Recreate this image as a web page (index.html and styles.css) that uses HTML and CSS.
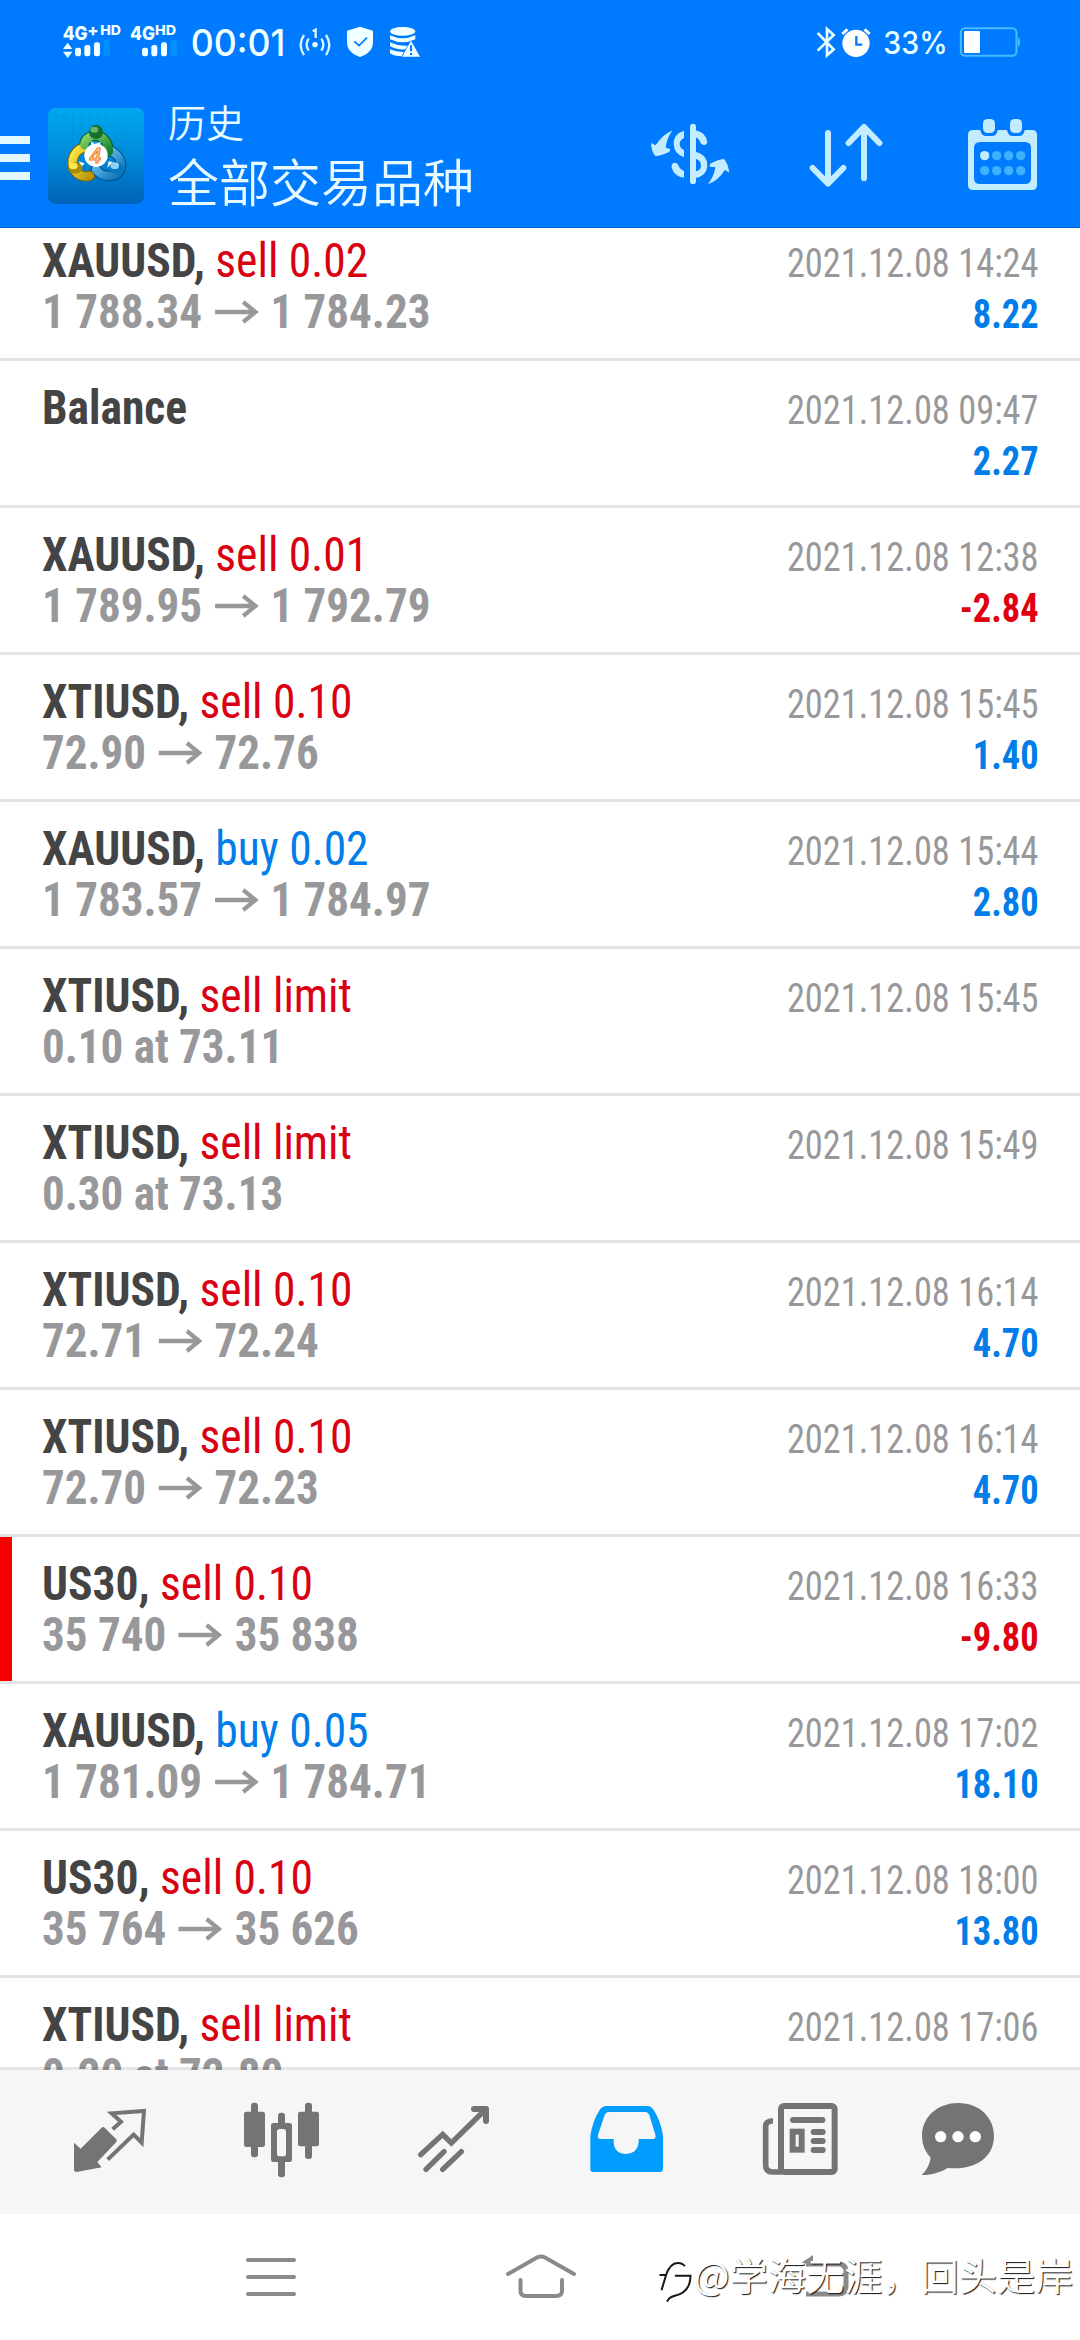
FILE: index.html
```html
<!DOCTYPE html>
<html lang="zh-CN">
<head>
<meta charset="utf-8">
<title>历史</title>
<link rel="stylesheet" href="styles.css">
</head>
<body>
<svg class="defs" aria-hidden="true"><symbol id="arrow" viewBox="0 0 46 24"><path d="M0 12H42M30 2L43 12L30 22" fill="none" stroke="currentColor" stroke-width="4.4"/></symbol></svg>

<header class="top">
  <div class="status">
    <svg class="status-left" viewBox="0 0 1200 150" fill="#f0ffff">
      <g font-family="Inter, sans-serif" font-weight="800">
        <text x="38" y="60" font-size="57" textLength="75" lengthAdjust="spacingAndGlyphs">4G</text>
        <text x="112" y="47" font-size="48" textLength="34" lengthAdjust="spacingAndGlyphs">+</text>
        <text x="151" y="45" font-size="40" textLength="62" lengthAdjust="spacingAndGlyphs">HD</text>
        <text x="240" y="60" font-size="57" textLength="75" lengthAdjust="spacingAndGlyphs">4G</text>
        <text x="315" y="45" font-size="40" textLength="63" lengthAdjust="spacingAndGlyphs">HD</text>
      </g>
      <text x="422" y="108" font-size="112" font-family="Inter, sans-serif" font-weight="500" textLength="284" lengthAdjust="spacingAndGlyphs">00:01</text>
      <path d="M53 68L67 87H39ZM39 95H67L53 114Z"/>
      <rect x="75" y="83" width="18" height="26" rx="7"/><rect x="103" y="75" width="18" height="34" rx="7"/><rect x="132" y="67" width="18" height="42" rx="7"/><rect x="162" y="60" width="18" height="49" rx="5" fill="#0091ff"/>
      <rect x="276" y="83" width="18" height="26" rx="7"/><rect x="304" y="75" width="18" height="34" rx="7"/><rect x="333" y="67" width="18" height="42" rx="7"/><rect x="363" y="60" width="18" height="49" rx="5" fill="#0091ff"/>
      <circle cx="795" cy="74" r="8"/>
      <path d="M788 34L797 29V54M776 56Q764 74 776 92M814 56Q826 74 814 92M762 45Q742 74 762 105M828 45Q848 74 828 105" fill="none" stroke="#d8f8ff" stroke-width="7"/>
      <path d="M930 20L969 32V66Q969 98 930 111Q891 98 891 66V32Z"/>
      <path d="M913 64L927 77L951 53" fill="none" stroke="#007aff" stroke-width="5"/>
      <ellipse cx="1058" cy="34" rx="38" ry="13"/>
      <path d="M1020 46Q1058 64 1096 46V58Q1058 76 1020 58ZM1020 67Q1046 80 1073 77L1066 88Q1040 90 1020 79ZM1020 88Q1040 97 1061 96L1055 109Q1032 109 1020 100Z"/>
      <path d="M1083 62L1110 110H1056Z"/>
      <path d="M1083 76V94M1083 99V105" stroke="#007aff" stroke-width="6"/>
    </svg>
    <svg class="status-right" viewBox="522 0 630 150" fill="#fff">
      <path d="M533 39L581 88L561 106V27L581 45L533 92" fill="none" stroke="#e8ffff" stroke-width="8"/>
      <circle cx="648" cy="70" r="41"/>
      <path d="M607 42L622 28M689 42L674 28" stroke="#fff" stroke-width="9"/>
      <path d="M649 48V74H667" fill="none" stroke="#007aff" stroke-width="7"/>
      <text x="730" y="103" font-size="92" font-family="Inter, sans-serif" font-weight="500" textLength="193" lengthAdjust="spacingAndGlyphs" fill="#e8ffff">33%</text>
      <rect x="962.500" y="24.500" width="167" height="83" rx="13" fill="none" stroke="#49bcff" stroke-width="6"/>
      <rect x="972" y="33" width="48" height="66" rx="3"/>
      <path d="M1134 52Q1140 54 1140 66Q1140 78 1134 80Z" fill="#49bcff"/>
    </svg>
  </div>
  <div class="bar">
    <div class="menu"><i></i><i></i><i></i></div>
    <svg class="logo" viewBox="144 24 288 288">
      <defs>
        <linearGradient id="bg" x1="0" y1="0" x2="0" y2="1"><stop offset="0" stop-color="#00a9f0"/><stop offset=".5" stop-color="#008ada"/><stop offset="1" stop-color="#0063b8"/></linearGradient>
        <linearGradient id="gr" x1="0" y1="0" x2="1" y2="1"><stop offset="0" stop-color="#8fd36c"/><stop offset="1" stop-color="#12832b"/></linearGradient>
        <linearGradient id="ye" x1="0" y1="0" x2="1" y2="1"><stop offset="0" stop-color="#ffed4a"/><stop offset="1" stop-color="#b99600"/></linearGradient>
        <linearGradient id="bl" x1="0" y1="0" x2="1" y2="1"><stop offset="0" stop-color="#7cd0f7"/><stop offset="1" stop-color="#0872b8"/></linearGradient>
      </defs>
      <rect x="144" y="24" width="288" height="288" rx="22" fill="url(#bg)"/>
      <path d="M168 24V312M193 24V312M218 24V312M243 24V312M268 24V312M293 24V312M318 24V312M343 24V312M368 24V312M393 24V312M144 49H432M144 74H432M144 262H432M144 287H432" stroke="#0a6fb4" stroke-opacity=".25" stroke-width="1.500"/>
      <g fill="none" stroke-width="25" stroke-linecap="round">
        <path d="M253 136C255 98 322 90 327 155" stroke="#075c22" stroke-width="31"/>
        <path d="M250 143C217 152 203 203 238 224Q254 232 270 227" stroke="#806500" stroke-width="31"/>
        <path d="M330 152C372 168 375 222 336 227Q305 232 288 208" stroke="#064d83" stroke-width="31"/>
        <path d="M330 152C372 168 375 222 336 227Q305 232 288 208" stroke="url(#bl)"/>
        <path d="M250 143C217 152 203 203 238 224Q254 232 270 227" stroke="url(#ye)"/>
        <path d="M253 136C255 98 322 90 327 155" stroke="url(#gr)"/>
      </g>
      <path d="M272 122L284 132L303 125L296 142H276ZM236 184L254 190L245 200ZM326 184L322 203L339 187Z" fill="#f2fbf2"/>
      <circle cx="288" cy="96" r="21" fill="#176d2c"/><ellipse cx="283" cy="89" rx="12" ry="9" fill="#64b56b"/>
      <ellipse cx="226" cy="204" rx="21" ry="17" fill="#a98c00"/><ellipse cx="220" cy="198" rx="13" ry="10" fill="#ffe94f"/>
      <ellipse cx="348" cy="203" rx="21" ry="18" fill="#0b76bd"/><ellipse cx="344" cy="197" rx="13" ry="10" fill="#8ed4f6"/>
      <circle cx="288" cy="166" r="35" fill="#fff"/>
      <text x="286" y="188" text-anchor="middle" font-family="Inter, sans-serif" font-style="italic" font-weight="500" font-size="60" fill="#ffe0b8" stroke="#f07a1c" stroke-width="3">4</text>
    </svg>
    <div class="titles"><div class="t1">历史</div><div class="t2">全部交易品种</div></div>
    <svg class="ic-cur" viewBox="30 294 240 219" fill="#c3ecff">
      <path d="M97 332Q70 340 47 376L33 369Q34 395 46 408Q58 409 88 396L91 387L77 383Q80 354 97 332Z"/>
      <path d="M204 492Q233 484 255 449L268 458Q264 430 252 417Q232 418 210 432L209 440L226 442Q222 470 204 492Z"/>
      <path d="M132 332Q100 342 101 372Q102 402 132 412V390Q119 384 119 372Q119 360 132 354Z"/>
      <path d="M106 428Q93 428 95 443Q103 469 132 473V453Q120 448 114 434Q111 428 106 428Z"/>
      <rect x="150" y="311" width="18" height="182" rx="9"/>
      <path d="M166 331Q198 336 202 368Q196 380 183 371Q177 355 166 352ZM166 395Q203 404 202 438Q200 468 166 474V454Q182 452 183 438Q183 420 166 416Z"/>
    </svg>
    <svg class="ic-sort" viewBox="501 294 240 219" fill="none" stroke="#c3ecff" stroke-width="18" stroke-linecap="round" stroke-linejoin="round"><path d="M564 339V488M518 444L564 491L610 444M672 475V323M626 369L672 321L718 369"/></svg>
    <svg class="ic-cal" viewBox="978 294 219 219">
      <path fill="#c3ecff" fill-rule="evenodd" d="M999 330H1018Q1023 330 1023 337Q1026 348 1038 348H1056Q1068 348 1071 337Q1072 330 1076 330H1098Q1103 330 1103 337Q1106 348 1118 348H1137Q1149 348 1152 337Q1152 330 1157 330H1176Q1191 330 1191 345V496Q1191 510 1176 510H999Q984 510 984 496V345Q984 330 999 330ZM1020 366Q1002 366 1002 384V474Q1002 492 1020 492H1155Q1173 492 1173 474V384Q1173 366 1155 366Z"/>
      <rect x="1029" y="297" width="36" height="42" rx="14" fill="#c3ecff"/><rect x="1110" y="297" width="36" height="42" rx="14" fill="#c3ecff"/>
      <circle cx="1034" cy="407" r="14" fill="#c3ecff"/>
      <g fill="#3eb2ff"><circle cx="1070" cy="407" r="14"/><circle cx="1106" cy="407" r="14"/><circle cx="1142" cy="407" r="14"/><circle cx="1034" cy="452" r="14"/><circle cx="1070" cy="452" r="14"/><circle cx="1106" cy="452" r="14"/><circle cx="1142" cy="452" r="14"/></g>
    </svg>
  </div>
</header>

<main class="list">
  <div class="row first"><div class="l"><p class="name"><b>XAUUSD,</b> <span class="sell">sell 0.02</span></p><p class="price">1 788.34<svg><use href="#arrow"/></svg>1 784.23</p></div><div class="r"><p class="date">2021.12.08 14:24</p><p class="profit">8.22</p></div></div>
  <div class="row"><div class="l"><p class="name"><b>Balance</b></p></div><div class="r"><p class="date">2021.12.08 09:47</p><p class="profit">2.27</p></div></div>
  <div class="row"><div class="l"><p class="name"><b>XAUUSD,</b> <span class="sell">sell 0.01</span></p><p class="price">1 789.95<svg><use href="#arrow"/></svg>1 792.79</p></div><div class="r"><p class="date">2021.12.08 12:38</p><p class="profit loss">-2.84</p></div></div>
  <div class="row"><div class="l"><p class="name"><b>XTIUSD,</b> <span class="sell">sell 0.10</span></p><p class="price">72.90<svg><use href="#arrow"/></svg>72.76</p></div><div class="r"><p class="date">2021.12.08 15:45</p><p class="profit">1.40</p></div></div>
  <div class="row"><div class="l"><p class="name"><b>XAUUSD,</b> <span class="buy">buy 0.02</span></p><p class="price">1 783.57<svg><use href="#arrow"/></svg>1 784.97</p></div><div class="r"><p class="date">2021.12.08 15:44</p><p class="profit">2.80</p></div></div>
  <div class="row"><div class="l"><p class="name"><b>XTIUSD,</b> <span class="sell">sell limit</span></p><p class="price">0.10 at 73.11</p></div><div class="r"><p class="date">2021.12.08 15:45</p></div></div>
  <div class="row"><div class="l"><p class="name"><b>XTIUSD,</b> <span class="sell">sell limit</span></p><p class="price">0.30 at 73.13</p></div><div class="r"><p class="date">2021.12.08 15:49</p></div></div>
  <div class="row"><div class="l"><p class="name"><b>XTIUSD,</b> <span class="sell">sell 0.10</span></p><p class="price">72.71<svg><use href="#arrow"/></svg>72.24</p></div><div class="r"><p class="date">2021.12.08 16:14</p><p class="profit">4.70</p></div></div>
  <div class="row"><div class="l"><p class="name"><b>XTIUSD,</b> <span class="sell">sell 0.10</span></p><p class="price">72.70<svg><use href="#arrow"/></svg>72.23</p></div><div class="r"><p class="date">2021.12.08 16:14</p><p class="profit">4.70</p></div></div>
  <div class="row marked"><div class="l"><p class="name"><b>US30,</b> <span class="sell">sell 0.10</span></p><p class="price">35 740<svg><use href="#arrow"/></svg>35 838</p></div><div class="r"><p class="date">2021.12.08 16:33</p><p class="profit loss">-9.80</p></div></div>
  <div class="row"><div class="l"><p class="name"><b>XAUUSD,</b> <span class="buy">buy 0.05</span></p><p class="price">1 781.09<svg><use href="#arrow"/></svg>1 784.71</p></div><div class="r"><p class="date">2021.12.08 17:02</p><p class="profit">18.10</p></div></div>
  <div class="row"><div class="l"><p class="name"><b>US30,</b> <span class="sell">sell 0.10</span></p><p class="price">35 764<svg><use href="#arrow"/></svg>35 626</p></div><div class="r"><p class="date">2021.12.08 18:00</p><p class="profit">13.80</p></div></div>
  <div class="row"><div class="l"><p class="name"><b>XTIUSD,</b> <span class="sell">sell limit</span></p><p class="price">0.20 at 72.80</p></div><div class="r"><p class="date">2021.12.08 17:06</p></div></div>
</main>

<nav class="tabs">
  <svg viewBox="30 120 240 240"><path fill="#747474" d="M42 248L62 266L124 204Q129 198 135 204L168 237Q173 242 167 248L112 306L125 322L50 336Q42 336 42 328Z"/><path d="M158 208L183 185L155 160L252 153L245 248L221 224L143 299" fill="none" stroke="#747474" stroke-width="12"/></svg>
  <svg viewBox="543 120 240 240" fill="#747474"><rect x="573" y="128" width="21" height="164" rx="9"/><rect x="552" y="155" width="63" height="106" rx="7"/><rect x="735" y="128" width="21" height="169" rx="9"/><rect x="714" y="155" width="63" height="104" rx="7"/><rect x="654" y="158" width="21" height="45" rx="9"/><rect x="654" y="295" width="21" height="57" rx="9"/><path fill-rule="evenodd" d="M640 189H689Q696 189 696 196V299Q696 306 689 306H640Q633 306 633 299V196Q633 189 640 189ZM659 207Q651 207 651 215V281Q651 289 659 289H670Q678 289 678 281V215Q678 207 670 207Z"/></svg>
  <svg viewBox="1062 120 240 240" fill="none" stroke="#747474" stroke-width="16" stroke-linecap="round" stroke-linejoin="round"><path d="M1082 284L1148 223L1174 249L1278 147" stroke-linejoin="miter"/><path d="M1242 147H1278V183" stroke-width="18"/><path d="M1098 328L1152 275M1148 328L1204 275"/></svg>
  <svg viewBox="0 0 240 240"><path fill="#009dff" fill-rule="evenodd" d="M58 18H182Q192 18 200 30Q222 64 228 108V206Q228 216 218 216H20Q10 216 10 206V108Q16 64 38 30Q46 18 58 18ZM66 36Q57 36 53 45L33 104Q30 117 42 117H80V127Q82 162 118 162Q152 160 155 127V117H196Q209 117 205 104L187 45Q183 36 174 36Z"/></svg>
  <svg viewBox="360 60 240 240"><g fill="none" stroke="#747474" stroke-width="18"><rect x="423" y="78" width="161" height="198" rx="9"/><path d="M399 123Q377 122 377 140V256Q377 276 397 276H425" stroke-width="17"/><path d="M459 120H547M521 156H548M521 183H548M521 210H548" stroke-linecap="round"/><rect x="458" y="155" width="27" height="54"/></g></svg>
  <svg viewBox="834 60 240 240"><path fill="#747474" d="M954 69C1022 69 1062 116 1062 168C1062 232 1006 272 923 264C902 277 877 285 847 285Q845 280 852 278Q868 258 872 233Q846 206 846 168C846 110 894 69 954 69Z"/><g fill="#fff"><circle cx="902" cy="170" r="17"/><circle cx="954" cy="170" r="17"/><circle cx="1006" cy="170" r="17"/></g></svg>
</nav>

<footer class="sys">
  <svg class="s1" viewBox="0 0 50 40" stroke-width="4" stroke-linecap="round"><path d="M2 3H48M2 20H48M2 37H48"/></svg>
  <svg class="s2" viewBox="504 2252 74 50" stroke-width="4" stroke-linecap="round"><path d="M508 2274L537 2257.500Q541 2255.500 545 2257.500L574 2274M520.500 2280V2291Q520.500 2296 526 2296H556Q562 2296 562 2291V2280"/></svg>
  <svg class="s3" viewBox="800 2252 52 50" stroke-width="5"><path d="M806 2264H838Q846 2264 846 2272V2287Q846 2294 838 2294H806"/><path d="M801 2263L813 2255V2264Z" fill="#8a8a8a" stroke="none"/></svg>
  <div class="mark">
    <svg viewBox="50 540 110 135" fill="none" stroke="#161616" stroke-width="6"><path d="M63 634L76 590Q88 552 112 552Q127 552 133 562M57 588H78M103 590H150Q149 641 103 650Q84 655 80 668"/></svg>
    <span>@学海无涯，回头是岸</span>
  </div>
</footer>
</body>
</html>
```
FILE: styles.css
```css
* { box-sizing: border-box; margin: 0; padding: 0; }
body { width: 1080px; height: 2340px; overflow: hidden; display: flex; flex-direction: column; background: #fff; font-family: "Roboto Condensed", Roboto, sans-serif; }
svg { display: block; flex: none; }
.defs { position: absolute; width: 0; height: 0; }

.top { height: 228px; flex: none; background: #007aff; border-bottom: 1px solid #0064d2; }
.status { height: 70px; padding: 20px 56px 0 50px; display: flex; justify-content: space-between; }
.status-left { width: 400px; height: 50px; }
.status-right { width: 210px; height: 50px; }

.bar { height: 157px; display: flex; align-items: flex-start; }
.menu { width: 30px; margin: 66px 18px 0 0; display: flex; flex-direction: column; gap: 10px; }
.menu i { height: 8px; background: #e3f7ff; }
.logo { width: 96px; height: 96px; margin: 38px 24px 0 0; }
.titles { width: 482px; padding-top: 23px; color: #e6faff; font-family: "Noto Sans CJK SC", sans-serif; font-weight: 350; white-space: nowrap; }
.t1 { font-size: 38px; line-height: 55px; }
.t2 { font-size: 51px; line-height: 65px; }
.ic-cur { width: 80px; height: 73px; margin: 48px 77px 0 0; }
.ic-sort { width: 80px; height: 73px; margin: 48px 79px 0 0; }
.ic-cal { width: 73px; height: 73px; margin-top: 48px; }

.list { height: 1842px; flex: none; overflow: hidden; }
.row { height: 147px; padding: 21px 41px 0 42px; border-bottom: 3px solid #e3e3e3; display: flex; justify-content: space-between; white-space: nowrap; }
.first { margin-top: -14px; }
.marked { position: relative; }
.marked::before { content: ""; position: absolute; left: 0; top: 0; width: 12px; height: 144px; background: #f80000; }
.l { font-size: 48px; line-height: 51px; }
.name { transform: scaleX(.948); transform-origin: left; }
.name b { color: #444; }
.sell { color: #d90012; }
.buy { color: #007de8; }
.price { display: flex; align-items: center; font-weight: 700; color: #98989b; transform: scaleX(.938); transform-origin: left; }
.price svg { width: 49px; height: 24px; margin: 0 12px; }
.r { padding-top: 3px; font-size: 40px; line-height: 51px; text-align: right; transform: scaleX(.91); transform-origin: right; }
.date { color: #98989b; }
.profit { font-weight: 700; color: #007de8; }
.loss { color: #e00010; }

.tabs { position: relative; height: 147px; flex: none; margin-top: -3px; padding: 30px 0 0 70px; border-top: 3px solid rgba(0, 0, 0, .1); background: #f6f6f6 padding-box; display: grid; grid-template-columns: 171px 173px 173px 173px 158px 80px; }
.tabs svg { width: 80px; height: 80px; }

.sys { position: relative; flex: 1; padding-top: 38px; display: flex; }
.sys > svg { fill: none; stroke: #8a8a8a; }
.s1 { width: 50px; height: 40px; margin: 5px 208px 0 246px; }
.s2 { width: 74px; height: 50px; margin-right: 222px; }
.s3 { width: 52px; height: 50px; }
.mark { position: absolute; left: 657px; top: 34px; display: flex; color: #fff; font: 350 38px/52px "Noto Sans CJK SC", sans-serif; letter-spacing: .2px; text-shadow: 1px 1px 1px #111; white-space: nowrap; }
.mark svg { width: 37px; height: 45px; margin-top: 11px; }
```
